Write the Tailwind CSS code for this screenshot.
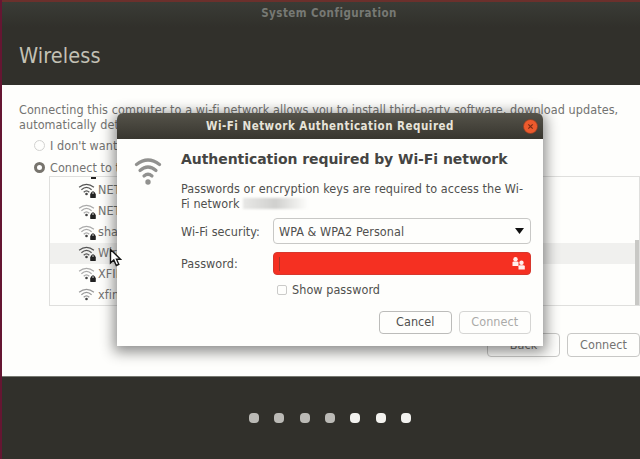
<!DOCTYPE html>
<html lang="en">
<head>
<meta charset="utf-8">
<title>System Configuration</title>
<script src="https://cdn.jsdelivr.net/npm/@tailwindcss/browser@4"></script>
</head>
<body class="w-[640px] h-[459px] overflow-hidden bg-[#31302b] font-['DejaVu_Sans_Condensed','DejaVu_Sans',sans-serif] text-[12.5px] tracking-[0.06px] leading-[15px] text-[#737371]">
<svg class="hidden">
  <symbol id="wifi" viewBox="0 0 28 28">
    <g fill="none" stroke="currentColor" stroke-width="3.2" stroke-linecap="round">
      <path d="M2.500 7.500Q14 -1.500 25.500 7.500"/><path d="M6 13.500Q14 6.500 22 13.500"/><path d="M10 19Q14 15.500 18 19"/>
    </g><circle cx="14" cy="25" r="2.700" fill="currentColor"/>
  </symbol>
  <symbol id="net" viewBox="0 0 18 14">
    <g fill="none" stroke="currentColor" stroke-width="1.300">
      <path d="M1 4.500Q9 -1.500 17 4.500"/><path d="M3.500 7.300Q9 2.300 14.500 7.300"/><path d="M6 10Q9 7 12 10"/>
    </g><circle cx="9" cy="11.800" r="1.400" fill="#444"/>
  </symbol>
  <symbol id="lock" viewBox="0 0 6 7"><path d="M1.500 3V2Q3 -.5 4.500 2V3" fill="none" stroke="#222" stroke-width="1.200"/><rect x=".2" y="2.500" width="5.600" height="4.500" rx=".4" fill="#222"/></symbol>
</svg>
<div class="relative h-[459px] w-[640px] border-l-2 border-[#651632] flex flex-col">
  <header class="h-[85px] shrink-0 border-t-2 border-[#6b302c] bg-linear-to-b from-[#3a3c36] via-[#31302b] via-30% to-[#31302b]">
    <div class="h-[22px] pt-[4px] pl-[16px] text-center font-bold text-[11.5px] tracking-[0.45px] text-[#777974]">System Configuration</div>
    <h1 class="pl-[17px] mt-[18px] text-[21.5px] leading-[28px] tracking-[0.1px] text-[#c3c1b5]">Wireless</h1>
  </header>
  <main class="h-[291px] shrink-0 bg-[#fefefc] pt-[17px] pl-[17px] flex flex-col">
    <p class="whitespace-nowrap tracking-[0.07px]">Connecting this computer to a wi-fi network allows you to install third-party software, download updates,<br>automatically detect your timezone, and provide full support for your language.</p>
    <div class="flex items-center gap-[5px] mt-[5px] ml-[15px] h-[16px]"><span class="size-[11px] rounded-full border border-[#d2d2d0]"></span><span>I don't want to connect to a wi-fi network right now</span></div>
    <div class="flex items-center gap-[5px] mt-[6px] ml-[15px] h-[16px]"><span class="size-[11px] rounded-full border-[3px] border-[#77746d] bg-white"></span><span>Connect to this network</span></div>
    <div class="mt-[1px] ml-[30px] w-[591px] h-[130px] border border-[#dfdfdd] overflow-hidden relative">
      <div class="h-[3px] pl-[41px]"><div class="h-[2px] w-[5px] bg-[#222]"></div></div>
      <div class="h-[21px] pb-[2px] pl-[28px] flex items-center gap-[3px]"><span class="relative flex"><svg class="w-[17px] h-[13px] text-[#555]"><use href="#net"/></svg><svg class="absolute left-[12px] top-[8px] w-[6px] h-[7px]"><use href="#lock"/></svg></span>NETGEAR</div>
      <div class="h-[21px] pb-[2px] pl-[28px] flex items-center gap-[3px]"><span class="relative flex"><svg class="w-[17px] h-[13px] text-[#aaa]"><use href="#net"/></svg><svg class="absolute left-[12px] top-[8px] w-[6px] h-[7px]"><use href="#lock"/></svg></span>NETGEAR</div>
      <div class="h-[21px] pb-[2px] pl-[28px] flex items-center gap-[3px]"><span class="relative flex"><svg class="w-[17px] h-[13px] text-[#aaa]"><use href="#net"/></svg><svg class="absolute left-[12px] top-[8px] w-[6px] h-[7px]"><use href="#lock"/></svg></span>shared</div>
      <div class="h-[21px] pb-[2px] pl-[28px] flex items-center gap-[3px] bg-[#f0f0ee]"><span class="relative flex"><svg class="w-[17px] h-[13px] text-[#555]"><use href="#net"/></svg><svg class="absolute left-[12px] top-[8px] w-[6px] h-[7px]"><use href="#lock"/></svg></span>Wireless</div>
      <div class="h-[21px] pb-[2px] pl-[28px] flex items-center gap-[3px]"><span class="relative flex"><svg class="w-[17px] h-[13px] text-[#aaa]"><use href="#net"/></svg><svg class="absolute left-[12px] top-[8px] w-[6px] h-[7px]"><use href="#lock"/></svg></span>XFINITY</div>
      <div class="h-[21px] pb-[2px] pl-[28px] flex items-center gap-[3px]"><svg class="w-[17px] h-[13px] text-[#999]"><use href="#net"/></svg>xfinitywifi</div>
      <div class="absolute right-0 bottom-0 w-[4px] h-[65px] bg-[#c8c8c5]"></div>
    </div>
    <div class="flex gap-[7px] ml-[468px] mt-[27px]"><div class="w-[73px] h-[24px] rounded-[4px] border border-[#c8c8c6] text-center leading-[21px]">Back</div><div class="w-[73px] h-[24px] rounded-[4px] border border-[#c8c8c6] text-center leading-[21px]">Connect</div></div>
  </main>
  <footer class="flex-1 flex justify-center gap-[15.3px] pt-[36px] pl-[18px] border-t border-[#777971]">
    <i class="size-[10px] rounded-[4px] bg-[#bbbab6]"></i><i class="size-[10px] rounded-[4px] bg-[#bbbab6]"></i><i class="size-[10px] rounded-[4px] bg-[#bbbab6]"></i><i class="size-[10px] rounded-[4px] bg-[#bbbab6]"></i><i class="size-[10px] rounded-[4px] bg-[#f3f2ef]"></i><i class="size-[10px] rounded-[4px] bg-[#f3f2ef]"></i><i class="size-[10px] rounded-[4px] bg-[#f3f2ef]"></i>
  </footer>
</div>
<section class="absolute left-[117px] top-[113px] w-[426px] h-[233px] rounded-t-[6px] bg-[#fefefc] shadow-[0_3px_14px_3px_rgba(0,0,0,0.45)] text-[#50504e]">
  <div class="h-[26px] rounded-t-[6px] bg-linear-to-b from-[#55534a] to-[#38362f] relative text-center text-[11.5px] font-bold tracking-[0.5px] leading-[27px] text-[#e7e4da]">Wi-Fi Network Authentication Required
    <svg class="absolute left-[406px] top-[6px] size-[15px]" viewBox="0 0 15 15"><circle cx="7.500" cy="7.500" r="7" fill="#ec5a2d" stroke="#913c21" stroke-width=".7"/><path d="M5.300 5.300L9.700 9.700M9.700 5.300L5.300 9.700" stroke="#7a2c15" stroke-width="1.200"/></svg>
  </div>
  <div class="flex">
    <svg class="w-[28px] h-[28px] mt-[18px] ml-[17px] text-[#91918f]"><use href="#wifi"/></svg>
    <div class="ml-[19px] w-[350px]">
      <h2 class="mt-[11px] font-['DejaVu_Sans',sans-serif] font-bold text-[14px] tracking-[-0.06px] leading-[18px] whitespace-nowrap text-[#454543]">Authentication required by Wi-Fi network</h2>
      <p class="mt-[13px] whitespace-nowrap">Passwords or encryption keys are required to access the Wi-<br>Fi network <span class="inline-block align-top w-[65px] h-[11px] mt-[2px] bg-linear-to-r from-[#e8e8e6] via-[#d0d0ce] to-[#fefefc] blur-[1px]"></span></p>
      <div class="mt-[7px] flex items-center"><span class="w-[92px]">Wi-Fi security:</span><div class="w-[258px] h-[26px] rounded-[4px] border border-[#c8c8c6] flex items-center justify-between pl-[5px] pr-[6px]">WPA &amp; WPA2 Personal<svg class="w-[9px] h-[6px]"><path d="M0 0H9L4.500 6Z" fill="#111"/></svg></div></div>
      <div class="mt-[8px] flex items-center"><span class="w-[92px]">Password:</span><div class="w-[258px] h-[23px] rounded-[4px] border border-[#d7372d] bg-[#f53022] flex items-center justify-between pl-[5px] pr-[5px]"><i class="w-px h-[14px] bg-[#a7362a]"></i><svg class="w-[13px] h-[13px]" viewBox="0 0 13 13" fill="#fff0ed"><circle cx="3.500" cy="2.200" r="2.200"/><path d="M.5 9V5.500Q.5 4.500 2 4.500H5Q6.500 4.500 6.500 5.500V9Z"/><circle cx="9.500" cy="5.800" r="2.200"/><path d="M6.500 12.500V9.300Q6.500 8.300 8 8.300H11Q12.800 8.300 12.800 9.300V12.500Z"/></svg></div></div>
      <div class="mt-[7px] ml-[96px] flex items-center gap-[5px]"><span class="size-[10px] rounded-[2px] border border-[#cbcbc9]"></span>Show password</div>
      <div class="mt-[14px] ml-[198px] flex gap-[7px]"><div class="w-[73px] h-[23px] rounded-[4px] border border-[#bcbcba] text-center leading-[20px]">Cancel</div><div class="w-[73px] h-[23px] rounded-[4px] border border-[#d5d5d3] text-center leading-[20px] text-[#aaaaa8]">Connect</div></div>
    </div>
  </div>
</section>
<svg class="absolute left-[109px] top-[248px] w-[13px] h-[19px]" viewBox="0 0 13 19"><path d="M1.500 1.500V15L4.800 12L7.300 17.500L9.800 16.300L7.500 11.200H11.500Z" fill="#fff" stroke="#151515" stroke-width="1.400"/></svg>
</body>
</html>
